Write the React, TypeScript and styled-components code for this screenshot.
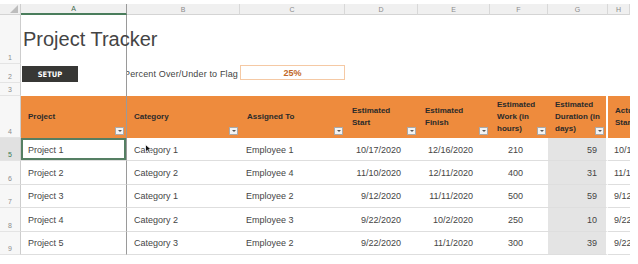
import React from 'react';
import styled, { createGlobalStyle } from 'styled-components';

const COLS = '21px 106px 113px 105px 73px 72px 58px 60px 22px';
const FONT = '"Liberation Sans", Arial, sans-serif';
const FROZEN = '#9a9a9a';

const GlobalStyle = createGlobalStyle`
  *, *::before, *::after { box-sizing: border-box; }
  html, body { margin: 0; padding: 0; background: #fff; }
  body { font-family: ${FONT}; color: #404040; }
`;

const Sheet = styled.div`
  width: 630px;
  margin-top: 4px;
  display: flex;
  flex-direction: column;
`;

const Row = styled.div<{ $h: number }>`
  display: grid;
  grid-template-columns: ${COLS};
  height: ${(p) => p.$h}px;
`;

const Corner = styled.div`
  background: #f0f0f0;
  border-right: 1px solid #cfcfcf;
  border-bottom: 1px solid #d4d4d4;
  display: flex;
  align-items: flex-end;
  justify-content: flex-end;
  padding: 0 2px 1px 0;
`;

const ColLetter = styled.div<{ $active?: boolean; $frozen?: boolean }>`
  display: flex;
  align-items: center;
  justify-content: center;
  background: #f0f0f0;
  border-right: 1px solid ${(p) => (p.$frozen ? FROZEN : '#d8d8d8')};
  border-bottom: ${(p) => (p.$active ? '2px solid #4a7d5c' : '1px solid #d4d4d4')};
  font-size: 7px;
  color: ${(p) => (p.$active ? '#3d6a4d' : '#8a8a8a')};
`;

const RowNum = styled.div<{ $active?: boolean }>`
  display: flex;
  align-items: flex-end;
  padding: 0 0 2px 8px;
  background: ${(p) => (p.$active ? '#e1e1e1' : '#f7f7f7')};
  color: ${(p) => (p.$active ? '#3a7a52' : '#8c8c8c')};
  font-size: 7px;
  border-right: 1px solid #cdcdcd;
  border-bottom: 1px solid #e4e4e4;
`;

const Blank = styled.div<{ $frozen?: boolean }>`
  border-right: ${(p) => (p.$frozen ? `1px solid ${FROZEN}` : 'none')};
  min-width: 0;
`;

const TitleCell = styled(Blank)`
  position: relative;
  z-index: 1;
`;

const Title = styled.div`
  padding: 13px 0 0 2px;
  font-size: 20px;
  color: #444;
  white-space: nowrap;
`;

const SetupButton = styled.div`
  width: 56px;
  height: 16px;
  margin: 2px 0 0 1px;
  background: #373735;
  color: #fff;
  font-family: "DejaVu Sans Condensed", "Liberation Sans", sans-serif;
  font-stretch: condensed;
  font-weight: bold;
  font-size: 7.5px;
  display: flex;
  align-items: center;
  justify-content: center;
`;

const FlagLabel = styled.div`
  display: flex;
  justify-content: flex-end;
  align-items: center;
  overflow: hidden;
  white-space: nowrap;
  padding: 1px 2px 0 0;
  font-size: 9px;
  letter-spacing: 0.15px;
  color: #444;
`;

const FlagSlot = styled.div`
  padding: 1px 0 3px 0;
`;

const FlagBox = styled.div`
  height: 100%;
  border: 1px solid #f5c9a4;
  display: flex;
  align-items: center;
  justify-content: center;
  font-size: 9px;
  font-weight: bold;
  color: #bf6726;
`;

const HeadCell = styled.div<{ $frozen?: boolean; $gap?: boolean }>`
  background: #ee8b3d;
  display: flex;
  align-items: center;
  padding-left: 7px;
  overflow: hidden;
  border-right: ${(p) =>
    p.$frozen ? `1px solid ${FROZEN}` : p.$gap ? '2px solid #fff' : 'none'};
`;

const HeadLabel = styled.div`
  flex: 1;
  min-width: 0;
  font-weight: bold;
  font-size: 8px;
  line-height: 12px;
  color: #2a2a2a;
  white-space: nowrap;
`;

const FilterBtn = styled.div`
  flex: none;
  align-self: flex-end;
  width: 9px;
  height: 8px;
  margin: 0 2px 3px 0;
  background: #f3f3f3;
  border: 1px solid #a9a9a9;
  display: flex;
  align-items: center;
  justify-content: center;
`;

const Caret = styled.div`
  width: 0;
  height: 0;
  border-left: 2px solid transparent;
  border-right: 2px solid transparent;
  border-top: 2px solid #555;
`;

const Cell = styled.div<{
  $right?: boolean;
  $pad: number;
  $shade?: boolean;
  $frozen?: boolean;
  $gap?: boolean;
  $active?: boolean;
}>`
  position: relative;
  display: flex;
  align-items: center;
  justify-content: ${(p) => (p.$right ? 'flex-end' : 'flex-start')};
  padding: 1px ${(p) => (p.$right ? p.$pad : 0)}px 0 ${(p) => (p.$right ? 0 : p.$pad)}px;
  background: ${(p) => (p.$shade ? '#e4e4e4' : '#fff')};
  border-bottom: 1px solid #dedede;
  border-right: ${(p) =>
    p.$frozen ? `1px solid ${FROZEN}` : p.$gap ? '2px solid #fff' : 'none'};
  box-shadow: ${(p) => (p.$active ? 'inset 0 0 0 2px #557f63' : 'none')};
  font-size: 9px;
  color: #454545;
  white-space: nowrap;
  overflow: hidden;
`;

const Pointer = styled.svg`
  position: absolute;
  left: 18px;
  top: 6px;
`;

type Col = { letter: string; head: string[]; right?: boolean; pad: number; shade?: boolean };

const columns: Col[] = [
  { letter: 'A', head: ['Project'], pad: 7 },
  { letter: 'B', head: ['Category'], pad: 7 },
  { letter: 'C', head: ['Assigned To'], pad: 6 },
  { letter: 'D', head: ['Estimated', 'Start'], right: true, pad: 17 },
  { letter: 'E', head: ['Estimated', 'Finish'], right: true, pad: 17 },
  { letter: 'F', head: ['Estimated', 'Work (in', 'hours)'], right: true, pad: 25 },
  { letter: 'G', head: ['Estimated', 'Duration (in', 'days)'], right: true, pad: 9, shade: true },
  { letter: 'H', head: ['Actual', 'Start'], pad: 6 },
];

const rows = [
  ['Project 1', 'Category 1', 'Employee 1', '10/17/2020', '12/16/2020', '210', '59', '10/17/2020'],
  ['Project 2', 'Category 2', 'Employee 4', '11/10/2020', '12/11/2020', '400', '31', '11/10/2020'],
  ['Project 3', 'Category 1', 'Employee 2', '9/12/2020', '11/11/2020', '500', '59', '9/12/2020'],
  ['Project 4', 'Category 2', 'Employee 3', '9/22/2020', '10/2/2020', '250', '10', '9/22/2020'],
  ['Project 5', 'Category 3', 'Employee 2', '9/22/2020', '11/1/2020', '300', '39', '9/22/2020'],
];

const App = () => (
  <>
    <GlobalStyle />
    <Sheet>
      <Row $h={11}>
        <Corner>
          <svg width="8" height="8" viewBox="0 0 8 8">
            <polygon points="8,0 8,8 0,8" fill="#bdbdbd" />
          </svg>
        </Corner>
        {columns.map((c, i) => (
          <ColLetter key={c.letter} $active={i === 0} $frozen={i === 0}>
            {c.letter}
          </ColLetter>
        ))}
      </Row>

      <Row $h={49}>
        <RowNum>1</RowNum>
        <TitleCell $frozen>
          <Title>Project Tracker</Title>
        </TitleCell>
        {columns.slice(1).map((c) => (
          <Blank key={c.letter} />
        ))}
      </Row>

      <Row $h={19}>
        <RowNum>2</RowNum>
        <Blank $frozen>
          <SetupButton>SETUP</SetupButton>
        </Blank>
        <FlagLabel>Percent Over/Under to Flag</FlagLabel>
        <FlagSlot>
          <FlagBox>25%</FlagBox>
        </FlagSlot>
        {columns.slice(3).map((c) => (
          <Blank key={c.letter} />
        ))}
      </Row>

      <Row $h={13}>
        <RowNum>3</RowNum>
        <Blank $frozen />
        {columns.slice(1).map((c) => (
          <Blank key={c.letter} />
        ))}
      </Row>

      <Row $h={42}>
        <RowNum>4</RowNum>
        {columns.map((c, i) => (
          <HeadCell key={c.letter} $frozen={i === 0} $gap={c.letter === 'G'}>
            <HeadLabel>
              {c.head.map((line) => (
                <div key={line}>{line}</div>
              ))}
            </HeadLabel>
            {c.letter !== 'H' && (
              <FilterBtn>
                <Caret />
              </FilterBtn>
            )}
          </HeadCell>
        ))}
      </Row>

      {rows.map((r, ri) => (
        <Row $h={23.4} key={r[0]}>
          <RowNum $active={ri === 0}>{ri + 5}</RowNum>
          {columns.map((c, ci) => (
            <Cell
              key={c.letter}
              $right={c.right}
              $pad={c.pad}
              $shade={c.shade}
              $frozen={ci === 0}
              $gap={c.letter === 'G'}
              $active={ri === 0 && ci === 0}
            >
              {r[ci]}
              {ri === 0 && ci === 1 && (
                <Pointer width="7" height="10" viewBox="0 0 7 10">
                  <polygon points="0.5,0.5 0.5,8 2.5,6.2 4,9.2 5.3,8.6 3.8,5.6 6.3,5.6" fill="#111" stroke="#fff" strokeWidth="0.8" />
                </Pointer>
              )}
            </Cell>
          ))}
        </Row>
      ))}
    </Sheet>
  </>
);

export default App;
